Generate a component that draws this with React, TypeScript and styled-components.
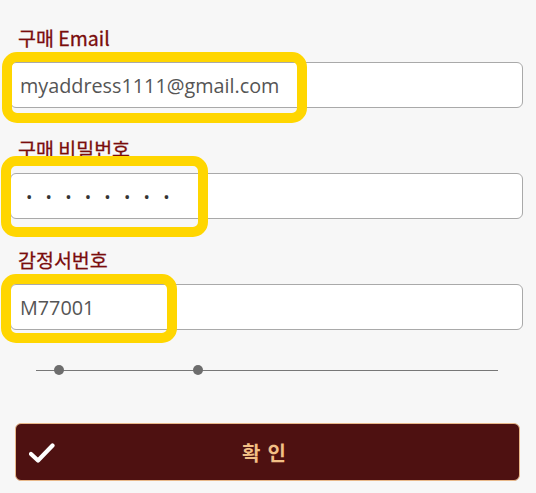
import React from "react";
import styled, { createGlobalStyle } from "styled-components";

const Global = createGlobalStyle`
  html, body { margin: 0; padding: 0; background: #f7f7f7; }
  body { font-family: "Open Sans", "Noto Sans CJK KR", sans-serif; }
`;

const Page = styled.div`
  width: 536px;
  height: 493px;
  background: #f7f7f7;
  box-sizing: border-box;
  padding: 25px 13px 0 10px;
  display: flex;
  flex-direction: column;
`;

const Field = styled.div<{ $gap: number }>`
  display: flex;
  flex-direction: column;
  margin-bottom: ${(p) => p.$gap}px;
`;

const Label = styled.label`
  font-family: "Noto Sans CJK KR", sans-serif;
  font-size: 19.5px;
  font-weight: 400;
  line-height: 26px;
  color: #7a0c0c;
  padding-left: 8px;
  margin-bottom: 11px;
  -webkit-text-stroke: 0.3px #7a0c0c;
`;

const InputWrap = styled.div`
  position: relative;
`;

const Input = styled.input<{ $dots?: boolean }>`
  box-sizing: border-box;
  width: 513px;
  height: 46px;
  border: 1px solid #a9a9a9;
  border-radius: 6px;
  background: #fff;
  padding: 0 0 0 9px;
  font-family: "Open Sans", sans-serif;
  font-size: 19.8px;
  color: #555;
  outline: none;
  letter-spacing: ${(p) => (p.$dots ? "13.2px" : "0")};
  ${(p) => (p.$dots ? "padding-left: 15px; font-size: 17px; color: #333;" : "")}
`;

const Highlight = styled.div<{ $l: number; $t: number; $w: number; $h: number }>`
  position: absolute;
  left: ${(p) => p.$l}px;
  top: ${(p) => p.$t}px;
  width: ${(p) => p.$w}px;
  height: ${(p) => p.$h}px;
  box-sizing: border-box;
  border: 10px solid #ffd600;
  border-radius: 15px;
  pointer-events: none;
`;

const SliderRow = styled.div`
  position: relative;
  height: 12px;
  margin: 34px 0 0 26px;
  width: 462px;
  display: flex;
  align-items: center;
`;

const Track = styled.div`
  flex: 1;
  height: 1px;
  background: #777;
`;

const Dot = styled.span<{ $x: number }>`
  position: absolute;
  left: ${(p) => p.$x}px;
  top: 1px;
  width: 10px;
  height: 10px;
  border-radius: 50%;
  background: #6d6d6d;
`;

const Button = styled.button`
  margin: 47px 0 0 5px;
  width: 505px;
  height: 58px;
  box-sizing: border-box;
  background: #4e1111;
  border: 1px solid #e8b88a;
  border-radius: 6px;
  display: flex;
  align-items: center;
  position: relative;
  padding: 0;
  cursor: pointer;
`;

const CheckIcon = styled.svg`
  position: absolute;
  left: 13px;
  top: 19px;
`;

const ButtonText = styled.span`
  flex: 1;
  text-align: center;
  font-family: "Noto Sans CJK KR", sans-serif;
  font-weight: 700;
  font-size: 20px;
  color: #f2bf86;
  letter-spacing: 7px;
  padding-left: 0;
`;

export default function App() {
  return (
    <>
      <Global />
      <Page>
        <Field $gap={28}>
          <Label>구매 Email</Label>
          <InputWrap>
            <Input readOnly value="myaddress1111@gmail.com" />
            <Highlight $l={-8} $t={-10} $w={305} $h={71} />
          </InputWrap>
        </Field>
        <Field $gap={28}>
          <Label>구매 비밀번호</Label>
          <InputWrap>
            <Input readOnly $dots value="••••••••" />
            <Highlight $l={-9} $t={-17} $w={207} $h={81} />
          </InputWrap>
        </Field>
        <Field $gap={0}>
          <Label>감정서번호</Label>
          <InputWrap>
            <Input readOnly value="M77001" />
            <Highlight $l={-9} $t={-10} $w={176} $h={69} />
          </InputWrap>
        </Field>
        <SliderRow>
          <Track />
          <Dot $x={18} />
          <Dot $x={157} />
        </SliderRow>
        <Button>
          <CheckIcon width="26" height="20" viewBox="0 0 26 20">
            <path
              d="M2 11 L9 17.5 L23.5 2.5"
              fill="none"
              stroke="#fff"
              strokeWidth="4.2"
              strokeLinecap="round"
              strokeLinejoin="round"
            />
          </CheckIcon>
          <ButtonText>확인</ButtonText>
        </Button>
      </Page>
    </>
  );
}
